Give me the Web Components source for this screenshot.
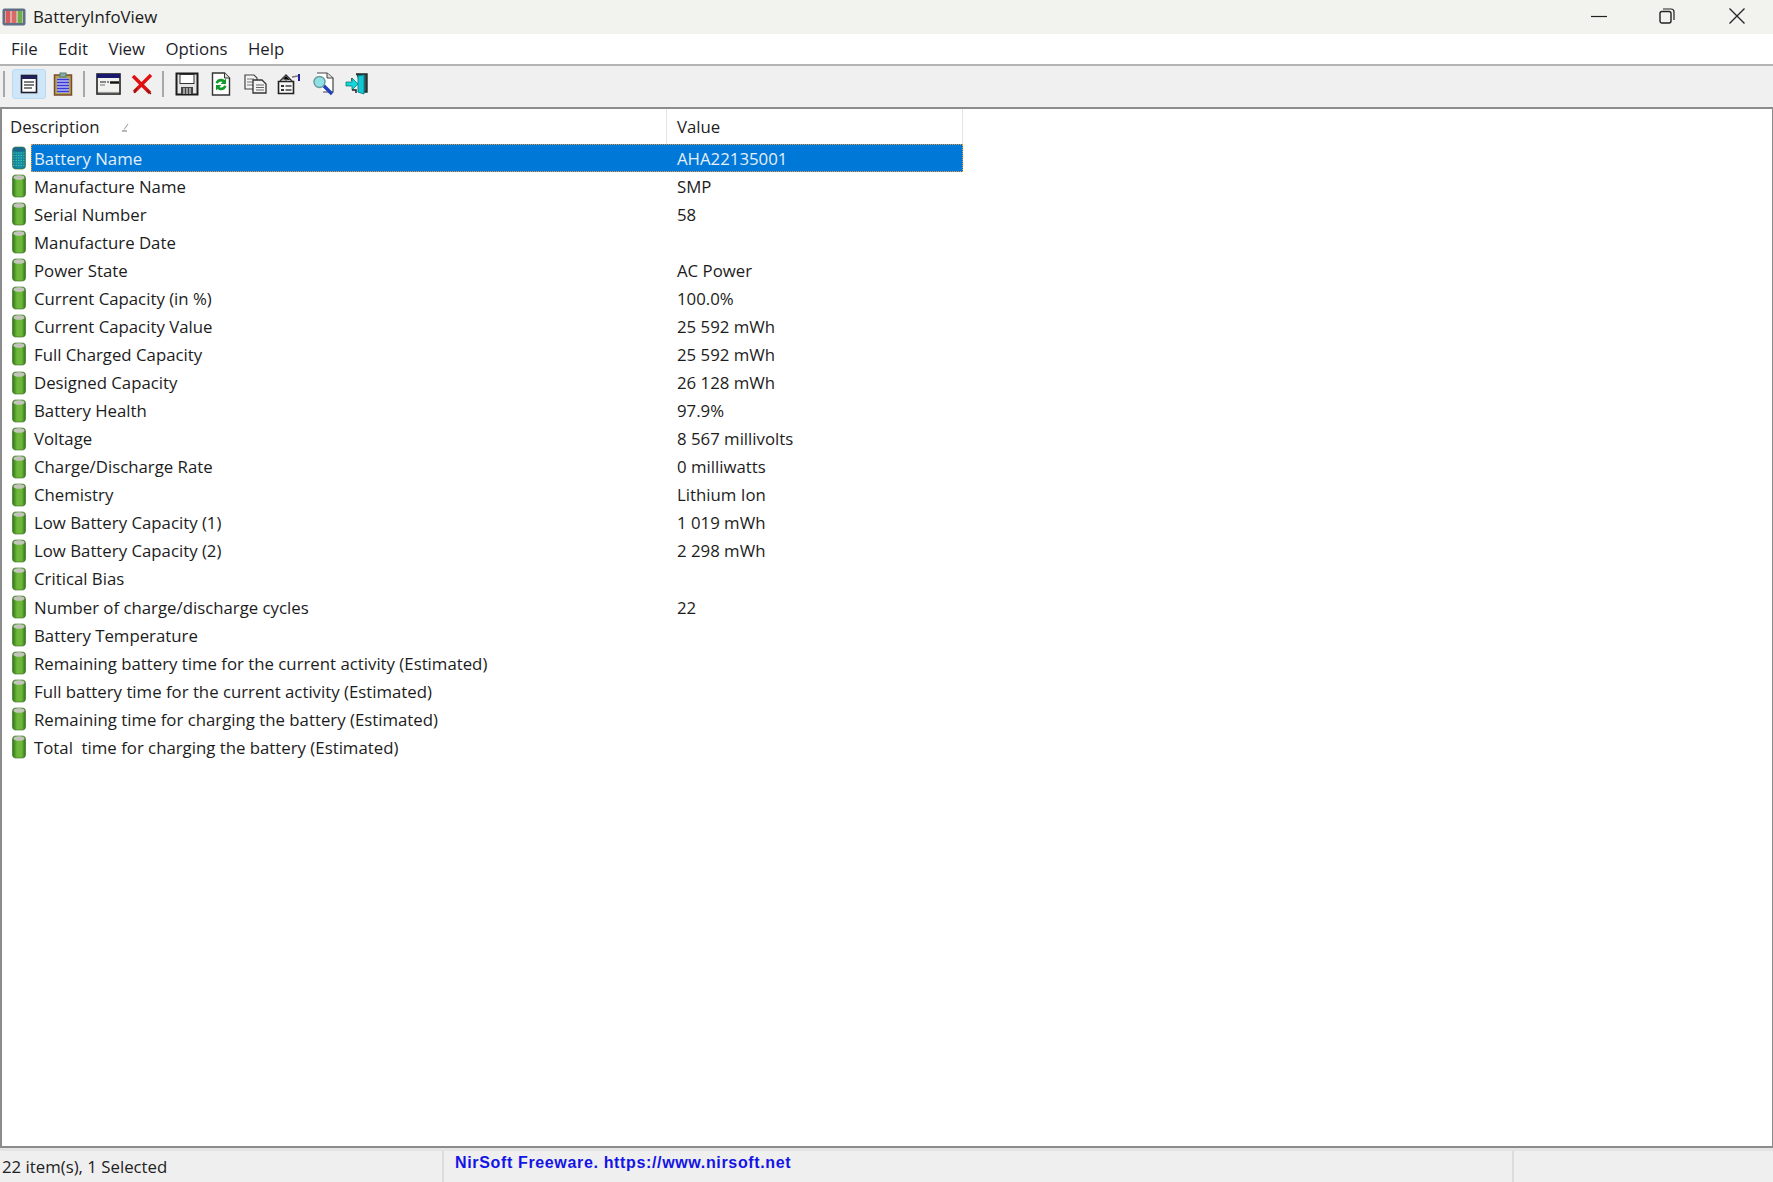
<!DOCTYPE html>
<html>
<head>
<meta charset="utf-8">
<title>BatteryInfoView</title>
<style>
  html, body { margin: 0; height: 100%; overflow: hidden; }
  body {
    display: flex;
    flex-direction: column;
    font-family: "Open Sans", "Noto Sans", sans-serif;
    font-size: 16.8px;
    color: #1c1c1c;
    background: #fff;
  }
  svg { display: block; }
</style>
</head>
<body>
<title-bar>BatteryInfoView</title-bar>
<menu-bar>
  <span>File</span><span>Edit</span><span>View</span><span>Options</span><span>Help</span>
</menu-bar>
<tool-bar>
  <tool-sep first></tool-sep>
  <tool-button active><svg width="20" height="20" viewBox="0 0 20 20"><rect x="2.500" y="1.500" width="15" height="17" fill="#fff" stroke="#1c1c2c" stroke-width="1.600"/><rect x="2.500" y="1.500" width="15" height="3.500" fill="#20205a"/><path d="M5 8h10M5 11h10M5 14h8" stroke="#555" stroke-width="1.400"/></svg></tool-button>
  <tool-button><svg width="20" height="24" viewBox="0 0 20 24"><rect x="1.500" y="3" width="17" height="20" fill="#b5a34a" stroke="#7a4a30" stroke-width="1.500"/><rect x="4" y="6" width="12" height="15" fill="#fff"/><path d="M4 7.500h12M4 10.500h12M4 13.500h12M4 16.500h12M4 19.500h12" stroke="#3838d8" stroke-width="1.900"/><rect x="7" y="1" width="6" height="4" fill="#7fb0a8" stroke="#5a7a70"/></svg></tool-button>
  <tool-sep></tool-sep>
  <tool-button><svg width="25" height="22" viewBox="0 0 25 22"><rect x="1" y="1" width="23" height="20" fill="#f2f2ee" stroke="#222" stroke-width="1.600"/><rect x="1" y="1" width="23" height="4" fill="#18186c"/><path d="M4 8h6v2H4zM11 8h2v2h-2z" fill="#888"/><path d="M14 9.500h9" stroke="#111" stroke-width="2.400"/><path d="M4 12h5" stroke="#999" stroke-width="1.400"/><path d="M2 19.500h21" stroke="#999" stroke-width="1.200"/></svg></tool-button>
  <tool-button><svg width="22" height="22" viewBox="0 0 22 22"><path d="M2 3 L19 20" stroke="#e01010" stroke-width="3.600"/><path d="M20 2 L3 19" stroke="#e01010" stroke-width="3.400"/><path d="M6 15 L3 20 M16 17 L20 21" stroke="#701818" stroke-width="1.200"/></svg></tool-button>
  <tool-sep></tool-sep>
  <tool-button><svg width="24" height="24" viewBox="0 0 24 24"><path d="M1.500 1.500h21v21h-21z" fill="#e4e4e4" stroke="#1c1c1c" stroke-width="2"/><rect x="5" y="2.500" width="14" height="9" fill="#fff" stroke="#333"/><rect x="6" y="15" width="12" height="7" fill="#444"/><path d="M9 16v6M12 16v6M15 16v6" stroke="#ddd" stroke-width="1.200"/></svg></tool-button>
  <tool-button><svg width="20" height="24" viewBox="0 0 20 24"><path d="M1.500 1h12l5 5v17h-17z" fill="#fff" stroke="#333" stroke-width="1.400"/><path d="M13.500 1v5h5" fill="#ddd" stroke="#333"/><path d="M4.500 11a5.500 5.500 0 0 1 9-3l1.500-1.500v5.500H9.500l2-2A3 3 0 0 0 7 11.500z" fill="#149a2c"/><path d="M15.500 14a5.500 5.500 0 0 1-9 3L5 18.500V13h5.500l-2 2A3 3 0 0 0 13 13.500z" fill="#149a2c"/></svg></tool-button>
  <tool-button><svg width="23" height="20" viewBox="0 0 23 20"><path d="M1 1h9l3 3v11H1z" fill="#f4f4f4" stroke="#444" stroke-width="1.200"/><path d="M3 5h7M3 8h7M3 11h7" stroke="#777"/><path d="M9 6h9l4 4v9H9z" fill="#f4f4f4" stroke="#333" stroke-width="1.300"/><path d="M12 11h8M12 13.500h8M12 16h8" stroke="#666"/></svg></tool-button>
  <tool-button><svg width="24" height="22" viewBox="0 0 24 22"><path d="M1.500 8.500h15v12h-15z" fill="#f6f6f6" stroke="#222" stroke-width="1.600"/><path d="M3 8 9 2l6 6" fill="#bbb" stroke="#333" stroke-width="1.300"/><path d="M5 6l4-3 4 4M6 4.500l4 4" stroke="#555"/><path d="M4 12h3v2H4zM4 16h3v2H4z" fill="#333"/><path d="M8.500 13h6M8.500 17h6" stroke="#444" stroke-width="1.300"/><path d="M15 4l6-1" stroke="#777" stroke-width="1.300"/><path d="M22 1v7" stroke="#20209a" stroke-width="2"/></svg></tool-button>
  <tool-button><svg width="23" height="24" viewBox="0 0 23 24"><path d="M5 1h10l6 5v14H11" fill="#fff" stroke="#444" stroke-width="1.200"/><path d="M15 1v5h6" fill="#ddd" stroke="#444"/><path d="M11 13l9 9" stroke="#1f3fbc" stroke-width="3.400"/><circle cx="7.500" cy="10" r="5.500" fill="#8fe0e4" stroke="#6a9a9e" stroke-width="1.400"/></svg></tool-button>
  <tool-button><svg width="24" height="23" viewBox="0 0 24 23"><path d="M11 1h11v18h-3" fill="#3a4a48" stroke="#1e2a2a" stroke-width="1.400"/><path d="M13 3l6-1v19l-6-2z" fill="#12c8d4" stroke="#0a8a94"/><path d="M7 8v-3" stroke="#222" stroke-width="1.500" fill="none"/><path d="M1 9h6V5l6 6-6 6v-4H1z" fill="#12d8d8" stroke="#087c84" stroke-width=".8"/><path d="M7 17h4v3" stroke="#222" stroke-width="1.500" fill="none"/></svg></tool-button>
</tool-bar>
<list-view>
  <list-row selected><span slot="name">Battery Name</span><span slot="value">AHA22135001</span></list-row>
  <list-row><span slot="name">Manufacture Name</span><span slot="value">SMP</span></list-row>
  <list-row><span slot="name">Serial Number</span><span slot="value">58</span></list-row>
  <list-row><span slot="name">Manufacture Date</span></list-row>
  <list-row><span slot="name">Power State</span><span slot="value">AC Power</span></list-row>
  <list-row><span slot="name">Current Capacity (in %)</span><span slot="value">100.0%</span></list-row>
  <list-row><span slot="name">Current Capacity Value</span><span slot="value">25 592 mWh</span></list-row>
  <list-row><span slot="name">Full Charged Capacity</span><span slot="value">25 592 mWh</span></list-row>
  <list-row><span slot="name">Designed Capacity</span><span slot="value">26 128 mWh</span></list-row>
  <list-row><span slot="name">Battery Health</span><span slot="value">97.9%</span></list-row>
  <list-row><span slot="name">Voltage</span><span slot="value">8 567 millivolts</span></list-row>
  <list-row><span slot="name">Charge/Discharge Rate</span><span slot="value">0 milliwatts</span></list-row>
  <list-row><span slot="name">Chemistry</span><span slot="value">Lithium Ion</span></list-row>
  <list-row><span slot="name">Low Battery Capacity (1)</span><span slot="value">1 019 mWh</span></list-row>
  <list-row><span slot="name">Low Battery Capacity (2)</span><span slot="value">2 298 mWh</span></list-row>
  <list-row><span slot="name">Critical Bias</span></list-row>
  <list-row><span slot="name">Number of charge/discharge cycles</span><span slot="value">22</span></list-row>
  <list-row><span slot="name">Battery Temperature</span></list-row>
  <list-row><span slot="name">Remaining battery time for the current activity (Estimated)</span></list-row>
  <list-row><span slot="name">Full battery time for the current activity (Estimated)</span></list-row>
  <list-row><span slot="name">Remaining time for charging the battery (Estimated)</span></list-row>
  <list-row><span slot="name">Total&nbsp; time for charging the battery (Estimated)</span></list-row>
</list-view>
<status-bar>
  <span>22 item(s), 1 Selected</span>
  <span slot="link">NirSoft Freeware. https://www.nirsoft.net</span>
</status-bar>

<script>
class TitleBar extends HTMLElement {
  constructor() {
    super();
    this.shadow = this.attachShadow({ mode: 'open' });
  }
  connectedCallback() {
    this.shadow.innerHTML = /*html*/`
      <style>
        :host { display:flex; align-items:flex-start; height:34px; background:#f2f2ef; flex:none; }
        .logo { margin:8px 7px 0 2px; }
        .name { flex:1; line-height:34px; margin-top:0; color:#1a1a1a; }
        .btn { width:70px; height:32px; display:flex; align-items:center; justify-content:center; }
        .btn.min { width:66px; }
        .btns { display:flex; margin-right:1px; }
      </style>
      <svg class="logo" width="24" height="18" viewBox="0 0 24 18">
        <rect x=".5" y=".5" width="23" height="17" rx="2" fill="#5f6f86"/>
        <rect x="3" y="3" width="18" height="12" fill="#e8e8e8"/>
        <rect x="3.500" y="3" width="5" height="12" fill="#d85a5a"/>
        <rect x="9.500" y="3" width="5" height="12" fill="#d86a6a"/>
        <rect x="15.500" y="3" width="5" height="12" fill="#6fae4a"/>
      </svg>
      <span class="name"><slot></slot></span>
      <div class="btns">
        <div class="btn min"><svg width="16" height="16" viewBox="0 0 16 16"><path d="M0 8.500h16" stroke="#222" stroke-width="1.200"/></svg></div>
        <div class="btn"><svg width="16" height="16" viewBox="0 0 16 16"><rect x="1" y="3.500" width="11" height="11.500" rx="2" fill="none" stroke="#222" stroke-width="1.400"/><path d="M4 1h8a3 3 0 0 1 3 3v8" fill="none" stroke="#222" stroke-width="1.200"/></svg></div>
        <div class="btn"><svg width="16" height="16" viewBox="0 0 16 16"><path d="M.5.500l15 15M15.500.500l-15 15" stroke="#222" stroke-width="1.300"/></svg></div>
      </div>
    `;
  }
}

class MenuBar extends HTMLElement {
  constructor() {
    super();
    this.shadow = this.attachShadow({ mode: 'open' });
  }
  connectedCallback() {
    this.shadow.innerHTML = /*html*/`
      <style>
        :host { display:flex; align-items:center; gap:20.500px; height:30px; padding:0 0 2px 11px; background:#fff; flex:none; color:#1e1e2a; box-sizing:border-box; }
      </style>
      <slot></slot>
    `;
  }
}

class ToolBar extends HTMLElement {
  constructor() {
    super();
    this.shadow = this.attachShadow({ mode: 'open' });
  }
  connectedCallback() {
    this.shadow.innerHTML = /*html*/`
      <style>
        :host { display:flex; align-items:center; height:43px; box-sizing:border-box; padding:0 0 5px 3px; background:#f0f0f0; border-top:2px solid #b4b4b4; flex:none; }
      </style>
      <slot></slot>
    `;
  }
}

class ToolButton extends HTMLElement {
  constructor() {
    super();
    this.shadow = this.attachShadow({ mode: 'open' });
  }
  connectedCallback() {
    this.shadow.innerHTML = /*html*/`
      <style>
        :host { display:flex; align-items:center; justify-content:center; width:34px; height:30px; box-sizing:border-box; border-radius:3px; }
        :host([active]) { background:#cfe6f8; border:1px solid #b8daf4; }
      </style>
      <slot></slot>
    `;
  }
}

class ToolSep extends HTMLElement {
  constructor() {
    super();
    this.shadow = this.attachShadow({ mode: 'open' });
  }
  connectedCallback() {
    this.shadow.innerHTML = /*html*/`
      <style>
        :host { display:block; width:2px; height:26px; background:#a8a8a8; margin:0 6px 0 3px; }
        :host([first]) { margin:0 7px 0 0; }
      </style>
    `;
  }
}

class ListView extends HTMLElement {
  constructor() {
    super();
    this.shadow = this.attachShadow({ mode: 'open' });
  }
  connectedCallback() {
    this.shadow.innerHTML = /*html*/`
      <style>
        :host { display:flex; flex-direction:column; flex:1; min-height:0; background:#fff; border:solid #8c8c8c; border-width:2px 1px 2px 2px; }
        .head { display:grid; grid-template-columns:665px 296px; height:35px; flex:none; }
        .head div { display:flex; align-items:center; box-sizing:border-box; border-right:1px solid #e4e4e4; padding-left:8px; color:#222; }
        .head div:nth-child(2) { padding-left:10px; }
        .sort { margin-left:21px; margin-top:2px; }
      </style>
      <div class="head">
        <div>Description<svg class="sort" width="8" height="9" viewBox="0 0 8 9"><path d="M7 1 3 6.500" stroke="#aaa" stroke-width="1.200"/><path d="M1 8h5" stroke="#888" stroke-width="1.200"/></svg></div>
        <div>Value</div>
      </div>
      <slot></slot>
    `;
  }
}

class ListRow extends HTMLElement {
  constructor() {
    super();
    this.shadow = this.attachShadow({ mode: 'open' });
  }
  connectedCallback() {
    const sel = this.hasAttribute('selected');
    const edge = sel ? '#14708c' : '#2e7414';
    const mid = sel ? '#1a8aa0' : '#6db83a';
    const id = sel ? 'gs' : 'g';
    this.shadow.innerHTML = /*html*/`
      <style>
        :host { display:grid; grid-template-columns:29px 932px; height:28.07px; align-items:stretch; flex:none; }
        .icon { display:flex; align-items:center; padding-left:10px; }
        .cells { display:grid; grid-template-columns:636px 296px; }
        .cell { display:flex; align-items:center; padding-left:3px; white-space:pre; }
        .cell.v { padding-left:10px; }
        :host([selected]) .cells { background:#0078d7; color:#e4effa; outline:1px dotted #e69a3c; outline-offset:-1px; }
      </style>
      <div class="icon">
        <svg width="14" height="24" viewBox="0 0 14 24">
          <defs><linearGradient id="${id}" x1="0" x2="1" y1="0" y2="0">
            <stop offset="0" stop-color="${edge}"/><stop offset=".35" stop-color="${mid}"/><stop offset=".7" stop-color="${mid}"/><stop offset="1" stop-color="${edge}"/>
          </linearGradient></defs>
          <path d="M.5 4Q.5 1.500 3 1h8q2.500.5 2.500 3v16q0 2.500-2.500 3H3q-2.500-.5-2.500-3z" fill="url(#${id})" stroke="#3a6a28" stroke-opacity=".6"/>
          <ellipse cx="7" cy="3.500" rx="5.500" ry="2.300" fill="${sel ? '#18688c' : '#c4c4bc'}"/>
          ${sel ? '<path d="M1 7h12M1 9.500h12M1 12h12M1 14.500h12M1 17h12M1 19.500h12" stroke="#35c0b0" stroke-width="1" stroke-dasharray="1.500 1"/>' : ''}
        </svg>
      </div>
      <div class="cells">
        <div class="cell"><slot name="name"></slot></div>
        <div class="cell v"><slot name="value"></slot></div>
      </div>
    `;
  }
}

class StatusBar extends HTMLElement {
  constructor() {
    super();
    this.shadow = this.attachShadow({ mode: 'open' });
  }
  connectedCallback() {
    this.shadow.innerHTML = /*html*/`
      <style>
        :host { display:grid; grid-template-columns:444px 1070px 1fr; height:34px; background:#efefef; border-top:3px solid #e4e4e4; flex:none; color:#222; box-sizing:border-box; }
        .p { display:flex; align-items:center; padding-left:2px; border-right:2px solid #dcdcdc; }
        .link { padding:3px 0 0 11px; align-items:flex-start; font:bold 16px "Liberation Sans", sans-serif; letter-spacing:.65px; color:#1414e6; }
        .last { border:none; }
      </style>
      <div class="p"><slot></slot></div>
      <div class="p link"><slot name="link"></slot></div>
      <div class="p last"></div>
    `;
  }
}

customElements.define('title-bar', TitleBar);
customElements.define('menu-bar', MenuBar);
customElements.define('tool-bar', ToolBar);
customElements.define('tool-button', ToolButton);
customElements.define('tool-sep', ToolSep);
customElements.define('list-view', ListView);
customElements.define('list-row', ListRow);
customElements.define('status-bar', StatusBar);
</script>
</body>
</html>
